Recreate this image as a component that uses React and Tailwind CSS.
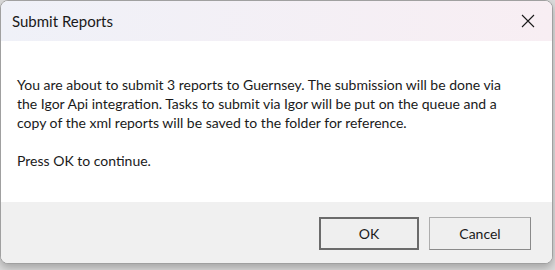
import React from 'react'

function App() {
  return (
    <div className="w-[555px] h-[270px] bg-[#dcdcdc] overflow-hidden" style={{ fontFamily: '"Segoe UI", Lato, sans-serif' }}>
      <div className="w-[553px] h-[264px] rounded-[8px] border border-[#a0a0a0] bg-white overflow-hidden flex flex-col shadow-[0_4px_8px_rgba(0,0,0,0.25)]">
        {/* title bar */}
        <div className="h-[40px] flex items-center justify-between bg-gradient-to-r from-[#eff1f8] to-[#f8eef3] pl-[11px] pr-[14px]">
          <span className="text-[15px] text-[#1a1a1a]">Submit Reports</span>
          <svg width="14" height="14" viewBox="0 0 14 14" className="mr-[3px]">
            <path d="M1 1 L13 13 M13 1 L1 13" stroke="#1a1a1a" strokeWidth="1.1" />
          </svg>
        </div>

        {/* message */}
        <div className="h-[161px] bg-white pl-[16px] pt-[34px] text-[14px] leading-[19px] text-[#1a1a1a] whitespace-nowrap">
          <p>
            You are about to submit 3 reports to Guernsey. The submission will be done via<br />
            the Igor Api integration. Tasks to submit via Igor will be put on the queue and a<br />
            copy of the xml reports will be saved to the folder for reference.
          </p>
          <p className="mt-[19px]">Press OK to continue.</p>
        </div>

        {/* buttons */}
        <div className="flex-1 bg-[#f0f0f0] flex justify-end items-start pt-[15px] pr-[21px] gap-[10px]">
          <button className="w-[100px] h-[33px] bg-[#efefef] border-2 border-[#6b6b6b] text-[14px] text-[#1a1a1a]">OK</button>
          <button className="w-[102px] h-[33px] bg-[#efefef] border border-[#adadad] border-b-[#8a8a8a] border-r-[#8a8a8a] text-[14px] text-[#1a1a1a]">Cancel</button>
        </div>
      </div>
    </div>
  )
}

export default App
